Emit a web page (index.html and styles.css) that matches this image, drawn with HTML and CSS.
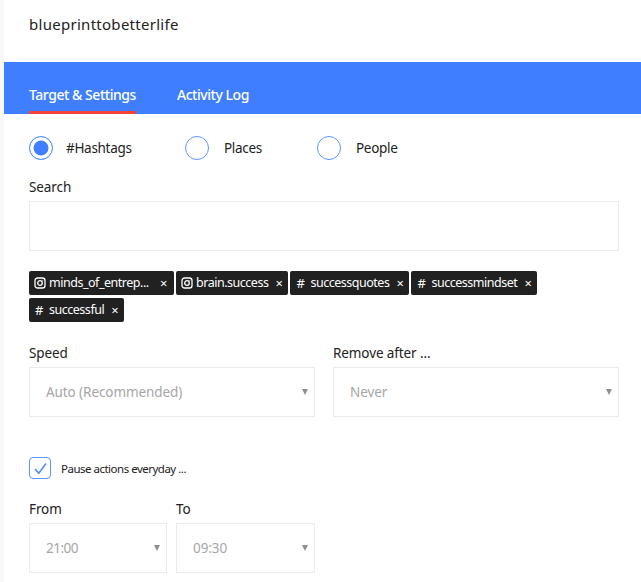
FILE: index.html
```html
<!DOCTYPE html>
<html lang="en">
<head>
<meta charset="utf-8">
<title>blueprinttobetterlife</title>
<link rel="stylesheet" href="styles.css">
</head>
<body>
<main class="panel">
  <header class="account">blueprinttobetterlife</header>
  <nav class="tabs">
    <a class="tab active">Target &amp; Settings</a>
    <a class="tab">Activity Log</a>
  </nav>
  <section class="content">
    <div class="radios">
      <div class="radio-item hash"><span class="radio checked"></span><span>#Hashtags</span></div>
      <div class="radio-item places"><span class="radio"></span><span>Places</span></div>
      <div class="radio-item people"><span class="radio"></span><span>People</span></div>
    </div>
    <label class="label search-label">Search</label>
    <div class="field search"></div>
    <div class="tags">
      <span class="tag tag-long"><svg class="ig" viewBox="0 0 12 12"><rect x="1" y="1" width="10" height="10" rx="2.6"/><circle cx="6" cy="6" r="2.3"/><circle class="dot" cx="8.8" cy="3.2" r=".5"/></svg><span class="long">minds_of_entrep...</span><span class="x">×</span></span>
      <span class="tag"><svg class="ig" viewBox="0 0 12 12"><rect x="1" y="1" width="10" height="10" rx="2.6"/><circle cx="6" cy="6" r="2.3"/><circle class="dot" cx="8.8" cy="3.2" r=".5"/></svg><span>brain.success</span><span class="x">×</span></span>
      <span class="tag"><span class="hash-mark">#</span><span>successquotes</span><span class="x">×</span></span>
      <span class="tag"><span class="hash-mark">#</span><span>successmindset</span><span class="x">×</span></span>
      <span class="tag"><span class="hash-mark">#</span><span>successful</span><span class="x">×</span></span>
    </div>
    <div class="row two">
      <div class="col">
        <label class="label">Speed</label>
        <div class="field select"><span>Auto (Recommended)</span><i class="caret"></i></div>
      </div>
      <div class="col">
        <label class="label">Remove after ...</label>
        <div class="field select"><span>Never</span><i class="caret"></i></div>
      </div>
    </div>
    <div class="pause">
      <span class="check"><svg viewBox="0 0 20 20"><path d="M5 11l3.8 4.2L16 5.5"/></svg></span>
      <span>Pause actions everyday ...</span>
    </div>
    <div class="row times">
      <div class="col from">
        <label class="label">From</label>
        <div class="field select narrow"><span>21:00</span><i class="caret"></i></div>
      </div>
      <div class="col to">
        <label class="label">To</label>
        <div class="field select"><span>09:30</span><i class="caret"></i></div>
      </div>
    </div>
  </section>
</main>
</body>
</html>
```
FILE: styles.css
```css
* { box-sizing: border-box; }
html, body { margin: 0; height: 100%; }
body {
  background: linear-gradient(to right, #f8f8f8 4px, #fff 4px);
  font-family: "Noto Sans", "Open Sans", sans-serif;
  color: #222;
  overflow: hidden;
}
.panel { margin-left: 4px; height: 582px; }
.account {
  height: 62px;
  padding: 14px 0 0 25px;
  font-size: 15px;
  line-height: 20px;
  letter-spacing: .28px;
  color: #222;
}
.tabs {
  height: 52px;
  background: #3f7fff;
  display: flex;
  padding-left: 25px;
  gap: 41px;
}
.tab {
  color: #fff;
  font-size: 14px;
  font-weight: 500;
  line-height: 19px;
  padding-top: 23px;
  letter-spacing: -.46px;
  height: 52px;
  white-space: nowrap;
}
.tab.active { border-bottom: 3px solid #f44336; width: 107px; }
.content { padding: 22px 22px 0 25px; }
.radios { display: flex; height: 24px; align-items: center; font-size: 13.5px; letter-spacing: -.3px; }
.radio-item { display: flex; align-items: center; gap: 15px; }
.radio-item.hash { width: 156px; gap: 13px; }
.radio-item.places { width: 132px; }
.radio {
  width: 24px; height: 24px; border-radius: 50%;
  border: 1px solid #5f93ff; background: #fff; display: block; flex: none;
}
.radio.checked { background: #3f7fff; box-shadow: inset 0 0 0 3.5px #fff; }
.label { display: block; font-size: 13.5px; line-height: 18px; letter-spacing: -.1px; color: #222; }
.search-label { margin-top: 18px; }
.field { border: 1px solid #ebebeb; background: #fff; height: 50px; margin-top: 5px; }
.tags { display: flex; flex-wrap: wrap; gap: 3px 2px; margin-top: 20px; width: 590px; }
.tag {
  height: 24px;
  background: #212121;
  border-radius: 2px;
  color: #fff;
  font-size: 12.5px;
  letter-spacing: -.48px;
  display: inline-flex;
  align-items: center;
  padding: 0 5px 1px 5px;
  white-space: nowrap;
}
.tag.tag-long { padding-right: 6px; }
.ig { width: 12px; height: 12px; fill: none; stroke: #fff; stroke-width: 1.3; margin: 1px 3px 0 0; flex: none; }
.ig .dot { fill: #fff; stroke: none; }
.hash-mark { width: 10px; margin-right: 5px; font-size: 13px; text-align: center; }
.long { min-width: 104px; }
.x { margin-left: 6px; width: 9px; font-size: 13px; text-align: center; }
.row { display: flex; }
.row.two { gap: 18px; margin-top: 22px; }
.two .col { width: 286px; }
.select {
  display: flex; align-items: center; justify-content: space-between;
  color: #a6a6a6; font-size: 13.5px;
  padding: 0 6px 0 16px;
  letter-spacing: -.08px;
}
.select.narrow { letter-spacing: -.5px; }
.caret {
  width: 0; height: 0; display: block; flex: none;
  border-left: 3px solid transparent; border-right: 3px solid transparent;
  border-top: 6px solid #8e8e8e;
}
.pause {
  display: flex; align-items: center; gap: 10px;
  margin-top: 40px; height: 22px;
  font-size: 11.5px; letter-spacing: -.5px;
}
.check {
  width: 22px; height: 22px; border: 1px solid #5f93ff; border-radius: 4px; display: block; flex: none;
}
.check svg { display: block; width: 20px; height: 20px; fill: none; stroke: #4f87ff; stroke-width: 1.5; }
.row.times { gap: 9px; margin-top: 21px; }
.from { width: 138px; }
.to { width: 139px; }
```
